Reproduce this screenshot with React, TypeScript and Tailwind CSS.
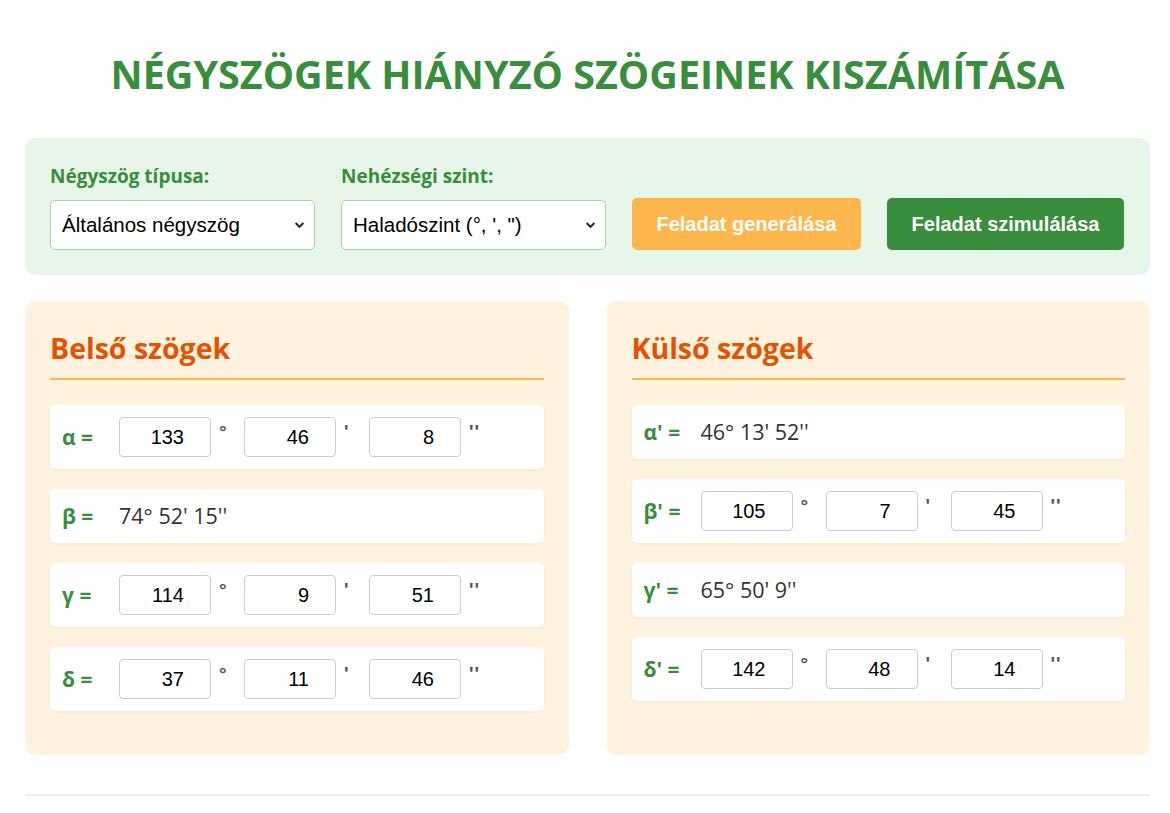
import React from "react";

const SEGOE = "font-['Open_Sans','Noto_Sans',sans-serif]";
const ARIAL = "font-['Liberation_Sans',Arial,sans-serif]";

type Dms = [string, string, string];
type Row = { label: string; inputs?: Dms; text?: string };

const inner: Row[] = [
  { label: "α =", inputs: ["133", "46", "8"] },
  { label: "β =", text: "74° 52' 15''" },
  { label: "γ =", inputs: ["114", "9", "51"] },
  { label: "δ =", inputs: ["37", "11", "46"] },
];

const outer: Row[] = [
  { label: "α' =", text: "46° 13' 52''" },
  { label: "β' =", inputs: ["105", "7", "45"] },
  { label: "γ' =", text: "65° 50' 9''" },
  { label: "δ' =", inputs: ["142", "48", "14"] },
];

function Chevron() {
  return (
    <svg
      className="pointer-events-none absolute right-[10px] top-1/2 -translate-y-1/2"
      width="11"
      height="11"
      viewBox="0 0 10 10"
    >
      <path d="M1.5 3.2 L5 6.7 L8.5 3.2" fill="none" stroke="#222" strokeWidth="1.8" />
    </svg>
  );
}

function Select({ value, options }: { value: string; options: string[] }) {
  return (
    <div className="relative w-[265px]">
      <select
        defaultValue={value}
        className={`${ARIAL} h-[50px] w-full appearance-none rounded-[5px] border border-[#a5d6a7] bg-white pl-[11px] text-[20.5px] text-black outline-none`}
      >
        {options.map((o) => (
          <option key={o}>{o}</option>
        ))}
      </select>
      <Chevron />
    </div>
  );
}

function Field({ label, children }: { label: string; children: React.ReactNode }) {
  return (
    <div className="flex flex-col gap-[11px]">
      <label className={`${SEGOE} text-[19px] font-bold leading-[26px] text-[#388e3c]`}>{label}</label>
      {children}
    </div>
  );
}

function NumBox({ value, unit }: { value: string; unit: string }) {
  return (
    <div className="flex items-start">
      <input
        defaultValue={value}
        className={`${ARIAL} h-[40px] w-[92px] rounded-[4px] border border-[#cccccc] bg-white pr-[26px] text-right text-[20px] text-black outline-none`}
      />
      <span
        className={`${ARIAL} w-[33px] pl-[8px] pt-[5px] text-[19px] font-bold leading-[20px] tracking-[1px] text-[#555]`}
      >
        {unit}
      </span>
    </div>
  );
}

function AngleRow({ row }: { row: Row }) {
  return (
    <div className="flex items-center rounded-[5px] bg-white px-[12px] py-[12px] shadow-[0_1px_3px_rgba(0,0,0,0.06)]">
      <span className={`${SEGOE} w-[57px] shrink-0 text-[21px] font-bold leading-[30px] text-[#388e3c]`}>
        {row.label}
      </span>
      {row.inputs ? (
        <div className="flex">
          <NumBox value={row.inputs[0]} unit="°" />
          <NumBox value={row.inputs[1]} unit="'" />
          <NumBox value={row.inputs[2]} unit="''" />
        </div>
      ) : (
        <span className={`${SEGOE} text-[21.5px] leading-[30px] text-[#333]`}>{row.text}</span>
      )}
    </div>
  );
}

function Card({ title, rows }: { title: string; rows: Row[] }) {
  return (
    <div className="rounded-[10px] bg-[#fff3e0] px-[25px] pb-[44px] pt-[28px]">
      <h2
        className={`${SEGOE} border-b-2 border-[#ffb74d] pb-[11px] text-[28.5px] font-bold leading-[38px] text-[#e65100]`}
      >
        {title}
      </h2>
      <div className="mt-[25px] flex flex-col gap-[20px]">
        {rows.map((r) => (
          <AngleRow key={r.label} row={r} />
        ))}
      </div>
    </div>
  );
}

export default function App() {
  return (
    <div className="min-h-screen bg-white pl-[25px] pr-[20px]">
      <h1
        className={`${SEGOE} pt-[46px] text-center text-[39.5px] font-bold leading-[56px] text-[#388e3c]`}
      >
        NÉGYSZÖGEK HIÁNYZÓ SZÖGEINEK KISZÁMÍTÁSA
      </h1>

      <div className="mt-[36px] flex items-end gap-[26px] rounded-[10px] bg-[#e8f5e9] px-[25px] pb-[25px] pt-[25px]">
        <Field label="Négyszög típusa:">
          <Select
            value="Általános négyszög"
            options={["Általános négyszög", "Paralelogramma", "Téglalap", "Rombusz", "Négyzet", "Trapéz", "Deltoid"]}
          />
        </Field>
        <Field label="Nehézségi szint:">
          <Select
            value={"Haladószint (°, ', \")"}
            options={["Alapszint (°)", "Középszint (°, ')", "Haladószint (°, ', \")"]}
          />
        </Field>
        <button
          className={`${ARIAL} h-[52px] w-[229px] rounded-[5px] bg-[#ffb74d] text-[20px] font-bold text-white`}
        >
          Feladat generálása
        </button>
        <button
          className={`${ARIAL} h-[52px] w-[237px] rounded-[5px] bg-[#388e3c] text-[20px] font-bold text-white`}
        >
          Feladat szimulálása
        </button>
      </div>

      <div className="mt-[26px] grid grid-cols-2 gap-[38px]">
        <Card title="Belső szögek" rows={inner} />
        <Card title="Külső szögek" rows={outer} />
      </div>

      <div className="mt-[39px] h-[2px] bg-[#eeeeee]" />
      <div className="h-[40px]" />
    </div>
  );
}
